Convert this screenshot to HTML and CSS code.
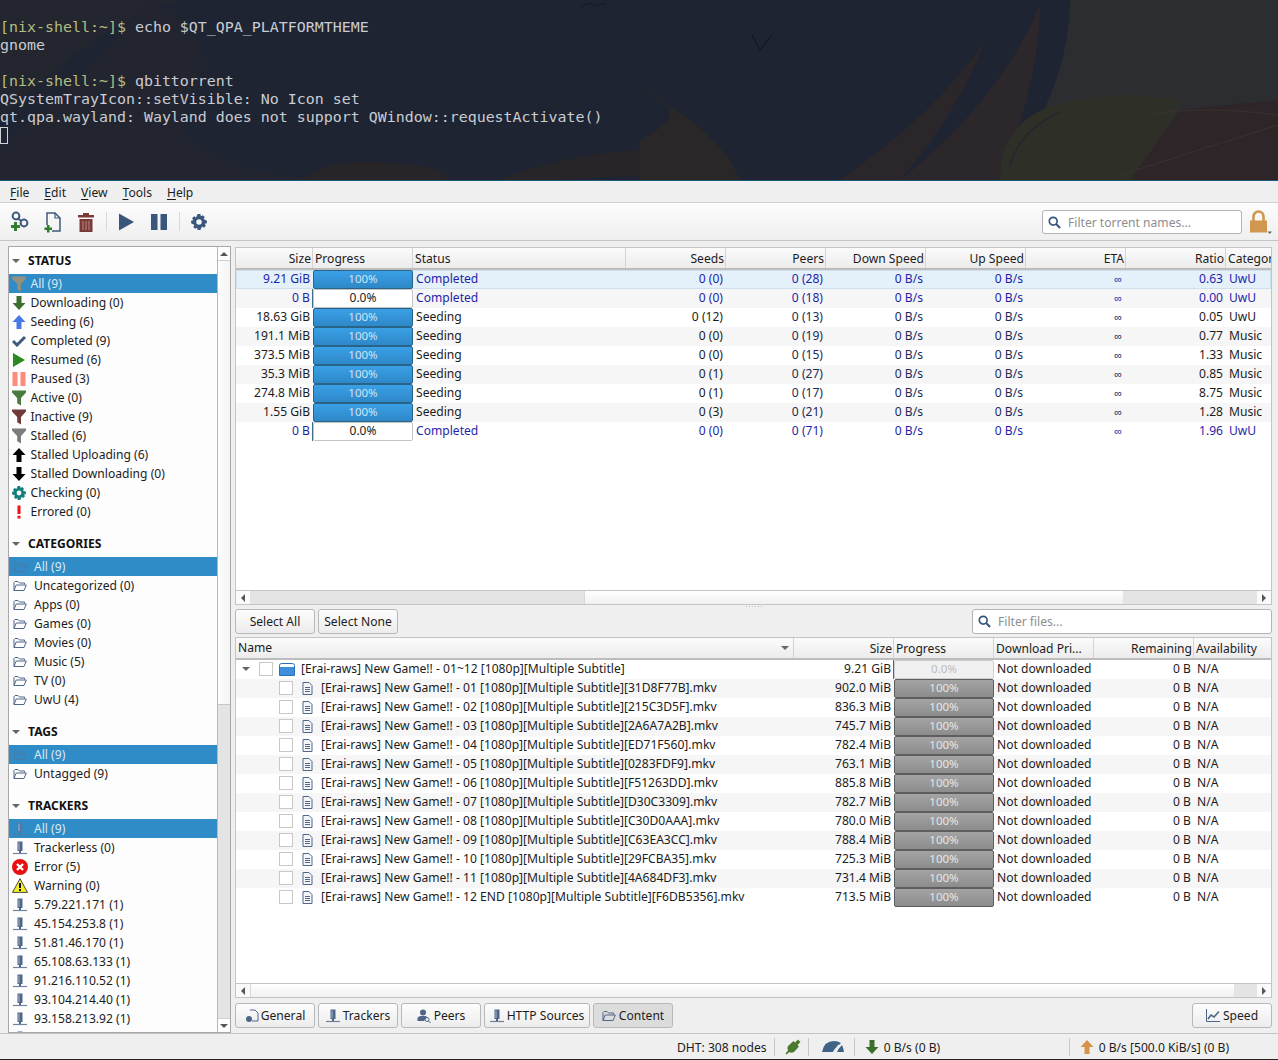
FILE: index.html
```html
<!DOCTYPE html>
<html lang="en">
<head>
    <meta charset="UTF-8">
    <title>qBittorrent</title>
    <link rel="stylesheet" href="styles.css">
</head>
<body>
    <svg class="defs" width="0" height="0">
        <symbol id="folder" viewBox="0 0 14 12"><path d="M1 10.5V2.5L2 1.5H5L6.5 3H11.5V4.5M1 10.5H11L13.3 5H3.2L1 10.5Z" fill="none" stroke="currentColor" stroke-width="1"/></symbol>
        <symbol id="tracker" viewBox="0 0 14 14"><path d="M4.5 0.5H9.5V10H4.5Z" fill="currentColor"/><path d="M6 1.5V9" stroke="#a9b5c6" stroke-width="1"/><path d="M0 12.5H14" stroke="currentColor" stroke-width="1.2" opacity=".8"/><path d="M6 10H8V12H6Z" fill="currentColor"/></symbol>
        <symbol id="filter" viewBox="0 0 14 16"><path d="M0 0.5H14V2.5L9 8V15.5L5.2 13.2V8L0 2.5Z" fill="currentColor"/></symbol>
        <symbol id="arrow-up" viewBox="0 0 14 14"><path d="M7 0L13.5 7H9.5V14H4.5V7H0.5Z" fill="currentColor"/></symbol>
        <symbol id="arrow-down" viewBox="0 0 14 14"><path d="M7 14L13.5 7H9.5V0H4.5V7H0.5Z" fill="currentColor"/></symbol>
        <symbol id="gear" viewBox="0 0 14 14"><path d="M5.8 0H8.2L8.6 2L10.3 1L12 2.7L11 4.4L13.9 5.8V8.2L12 8.6L13 10.3L11.3 12L9.6 11L8.2 14H5.8L5.4 12L3.7 13L2 11.3L3 9.6L0.1 8.2V5.8L2 5.4L1 3.7L2.7 2L4.4 3ZM7 4.6A2.4 2.4 0 1 0 7 9.4A2.4 2.4 0 1 0 7 4.6Z" fill="currentColor" fill-rule="evenodd"/></symbol>
        <symbol id="search" viewBox="0 0 14 14"><circle cx="5.6" cy="5.6" r="4.2" fill="none" stroke="currentColor" stroke-width="1.8"/><path d="M8.7 8.7L13 13" stroke="currentColor" stroke-width="2.2"/></symbol>
        <symbol id="doc" viewBox="0 0 11 13"><path d="M1 0.5H7L10 3.5V12.5H1Z" fill="#f4f6fa" stroke="currentColor"/><path d="M3 5.5H8M3 7.5H8M3 9.5H8" stroke="currentColor"/></symbol>
    </svg>

    <div class="terminal">
        <svg class="wall" viewBox="0 0 1278 180" width="1278" height="180">
            <path d="M0 180V120Q100 20 180 0H0Z" fill="#23262e"/>
            <path d="M150 0Q230 40 190 100Q150 160 320 180H0V150Q100 60 150 0Z" fill="#222530"/>
            <path d="M640 180V140Q700 110 640 90Q720 130 740 180Z" fill="#2a2729"/>
            <path d="M840 180Q940 110 985 40Q960 110 900 180Z" fill="#2b2629"/>
            <path d="M900 180Q1000 100 1040 5Q1040 80 1000 180Z" fill="#2b272b"/>
            <path d="M1000 180Q1070 90 1070 0H1278V180Z" fill="#2c2d30"/>
            <path d="M1000 180Q1000 110 1080 100Q1120 90 1180 100L1150 180Z" fill="#2e3028"/>
            <path d="M1130 180L1180 110L1278 100V180Z" fill="#2e2529"/>
            <path d="M1010 165Q1020 130 1060 112" fill="none" stroke="#1f2534" stroke-width="1.2"/>
            <path d="M1150 115Q1200 105 1278 115M1120 175L1278 125" fill="none" stroke="#3a3230" stroke-width="1"/>
            <path d="M300 180Q340 150 440 170L450 180ZM640 175L560 180H500Q560 155 640 150Z" fill="#272527"/>
            <path d="M752 35L760 50L772 35" fill="none" stroke="#151925" stroke-width="1.2"/>
            <path d="M581 7Q590 0 596 6Q600 2 606 4" fill="none" stroke="#151925" stroke-width="1"/>
        </svg>
        <div><span class="prompt">[nix-shell:~]$</span> echo $QT_QPA_PLATFORMTHEME</div>
        <div>gnome</div>
        <div>&nbsp;</div>
        <div><span class="prompt">[nix-shell:~]$</span> qbittorrent</div>
        <div>QSystemTrayIcon::setVisible: No Icon set</div>
        <div>qt.qpa.wayland: Wayland does not support QWindow::requestActivate()</div>
        <div class="cursor"></div>
    </div>

    <div class="app">
        <div class="menubar">
            <span><u>F</u>ile</span>
            <span><u>E</u>dit</span>
            <span><u>V</u>iew</span>
            <span><u>T</u>ools</span>
            <span><u>H</u>elp</span>
        </div>

        <div class="toolbar">
            <svg class="tool" viewBox="0 0 22 22" width="22" height="22"><g fill="none" stroke="#3f5a7c" stroke-width="2"><circle cx="7" cy="5" r="3.4"/><circle cx="15" cy="12" r="3.4"/><path d="M9 7.5L12.5 10"/></g><path d="M5 11H8V14H11V17H8V20H5V17H2V14H5Z" fill="#2f7d32"/></svg>
            <svg class="tool" viewBox="0 0 22 22" width="22" height="22"><path d="M5 14V2H13L18 7V20H10" fill="none" stroke="#41587a" stroke-width="1.5"/><path d="M13 2V7H18" fill="none" stroke="#41587a" stroke-width="1.2"/><path d="M5 14H7.5V16.5H10V19H7.5V21.5H5V19H2.5V16.5H5Z" fill="#2f7d32"/></svg>
            <svg class="tool" viewBox="0 0 22 22" width="22" height="22"><path d="M3 4H8V2H14V4H19V6.5H3ZM4.5 8H17.5V21H4.5Z" fill="#7c3a36"/><path d="M8 10V19M11 10V19M14 10V19" stroke="#b58a86" stroke-width="1"/></svg>
            <i class="tool-sep"></i>
            <svg class="tool" viewBox="0 0 22 22" width="22" height="22"><path d="M4 2.5L19 11L4 19.5Z" fill="#39567c"/></svg>
            <svg class="tool" viewBox="0 0 22 22" width="22" height="22"><path d="M3 3H9.5V19H3ZM12.5 3H19V19H12.5Z" fill="#39567c"/></svg>
            <i class="tool-sep"></i>
            <svg class="tool-gear" width="16" height="16"><use href="#gear"/></svg>
            <div class="toolbar-fill"></div>
            <div class="filter-box filter-torrents">
                <svg width="13" height="13"><use href="#search"/></svg>
                <span>Filter torrent names...</span>
            </div>
            <svg class="lock" viewBox="0 0 22 24" width="22" height="24"><path d="M3.5 11V6.5A5 5 0 0 1 13.5 6.5V11" fill="none" stroke="#cf9750" stroke-width="2.6"/><path d="M0 10.5H17V22.5H0Z" fill="#cf9750"/><path d="M17.5 21.5H22L19.7 24Z" fill="#666"/></svg>
        </div>

        <div class="main">
            <div class="sidebar">
                <div class="side-list">
                    <div class="side-head first"><i class="caret"></i>STATUS</div>
                    <div class="side-row sel st"><svg class="c-grey-t" width="14" height="16"><use href="#filter"/></svg>All (9)</div>
                    <div class="side-row st"><svg class="c-green" width="14" height="14"><use href="#arrow-down"/></svg>Downloading (0)</div>
                    <div class="side-row st"><svg class="c-blue" width="14" height="14"><use href="#arrow-up"/></svg>Seeding (6)</div>
                    <div class="side-row st"><svg class="c-navy" viewBox="0 0 14 12" width="14" height="12"><path d="M1 6L5 10L13 2" fill="none" stroke="currentColor" stroke-width="3"/></svg>Completed (9)</div>
                    <div class="side-row st"><svg class="c-play" viewBox="0 0 14 14" width="14" height="14"><path d="M1 0L13 7L1 14Z" fill="currentColor"/></svg>Resumed (6)</div>
                    <div class="side-row st"><svg class="c-pause" viewBox="0 0 14 14" width="14" height="14"><path d="M0.5 0H5.5V14H0.5ZM8.5 0H13.5V14H8.5Z" fill="currentColor"/></svg>Paused (3)</div>
                    <div class="side-row st"><svg class="c-green2" width="14" height="16"><use href="#filter"/></svg>Active (0)</div>
                    <div class="side-row st"><svg class="c-maroon" width="14" height="16"><use href="#filter"/></svg>Inactive (9)</div>
                    <div class="side-row st"><svg class="c-grey" width="14" height="16"><use href="#filter"/></svg>Stalled (6)</div>
                    <div class="side-row st"><svg class="c-black" width="14" height="14"><use href="#arrow-up"/></svg>Stalled Uploading (6)</div>
                    <div class="side-row st"><svg class="c-black" width="14" height="14"><use href="#arrow-down"/></svg>Stalled Downloading (0)</div>
                    <div class="side-row st"><svg class="c-teal" width="14" height="14"><use href="#gear"/></svg>Checking (0)</div>
                    <div class="side-row st"><svg class="c-red" viewBox="0 0 14 14" width="14" height="14"><path d="M5.5 0.5H8.5V9H5.5ZM5.5 10.7H8.5V13.5H5.5Z" fill="currentColor"/></svg>Errored (0)</div>

                    <div class="side-head"><i class="caret"></i>CATEGORIES</div>
                    <div class="side-row sel"><svg class="c-dim" width="14" height="12"><use href="#folder"/></svg>All (9)</div>
                    <div class="side-row"><svg class="c-slate" width="14" height="12"><use href="#folder"/></svg>Uncategorized (0)</div>
                    <div class="side-row"><svg class="c-slate" width="14" height="12"><use href="#folder"/></svg>Apps (0)</div>
                    <div class="side-row"><svg class="c-slate" width="14" height="12"><use href="#folder"/></svg>Games (0)</div>
                    <div class="side-row"><svg class="c-slate" width="14" height="12"><use href="#folder"/></svg>Movies (0)</div>
                    <div class="side-row"><svg class="c-slate" width="14" height="12"><use href="#folder"/></svg>Music (5)</div>
                    <div class="side-row"><svg class="c-slate" width="14" height="12"><use href="#folder"/></svg>TV (0)</div>
                    <div class="side-row"><svg class="c-slate" width="14" height="12"><use href="#folder"/></svg>UwU (4)</div>

                    <div class="side-head"><i class="caret"></i>TAGS</div>
                    <div class="side-row sel"><svg class="c-dim" width="14" height="12"><use href="#folder"/></svg>All (9)</div>
                    <div class="side-row"><svg class="c-slate" width="14" height="12"><use href="#folder"/></svg>Untagged (9)</div>

                    <div class="side-head"><i class="caret"></i>TRACKERS</div>
                    <div class="side-row sel"><svg class="c-dim" width="14" height="14"><use href="#tracker"/></svg>All (9)</div>
                    <div class="side-row"><svg class="c-slate" width="14" height="14"><use href="#tracker"/></svg>Trackerless (0)</div>
                    <div class="side-row"><svg viewBox="0 0 16 16" width="16" height="16" class="wide"><circle cx="8" cy="8" r="8" fill="#e8100f"/><path d="M5 5L11 11M11 5L5 11" stroke="#fff" stroke-width="2.4"/></svg>Error (5)</div>
                    <div class="side-row"><svg viewBox="0 0 16 15" width="16" height="15" class="wide"><path d="M8 0.7L15.5 14.4H0.5Z" fill="#f8ee2c" stroke="#333" stroke-width="0.9"/><path d="M7 5H9V10H7ZM7 11H9V13H7Z" fill="#111"/></svg>Warning (0)</div>
                    <div class="side-row"><svg class="c-slate" width="14" height="14"><use href="#tracker"/></svg>5.79.221.171 (1)</div>
                    <div class="side-row"><svg class="c-slate" width="14" height="14"><use href="#tracker"/></svg>45.154.253.8 (1)</div>
                    <div class="side-row"><svg class="c-slate" width="14" height="14"><use href="#tracker"/></svg>51.81.46.170 (1)</div>
                    <div class="side-row"><svg class="c-slate" width="14" height="14"><use href="#tracker"/></svg>65.108.63.133 (1)</div>
                    <div class="side-row"><svg class="c-slate" width="14" height="14"><use href="#tracker"/></svg>91.216.110.52 (1)</div>
                    <div class="side-row"><svg class="c-slate" width="14" height="14"><use href="#tracker"/></svg>93.104.214.40 (1)</div>
                    <div class="side-row"><svg class="c-slate" width="14" height="14"><use href="#tracker"/></svg>93.158.213.92 (1)</div>
                    <div class="side-row"><svg class="c-slate" width="14" height="14"><use href="#tracker"/></svg>94.23.207.177 (1)</div>
                </div>
                <div class="vscroll">
                    <div class="sb-btn"><i class="tri-up"></i></div>
                    <div class="vthumb"></div>
                    <div class="vtrack"></div>
                    <div class="sb-btn"><i class="tri-down"></i></div>
                </div>
            </div>

            <div class="content">
                <div class="table torrents">
                    <div class="thead torrent-cols">
                        <div class="r">Size</div><div>Progress</div><div>Status</div><div class="r">Seeds</div><div class="r">Peers</div><div class="r">Down Speed</div><div class="r">Up Speed</div><div class="r">ETA</div><div class="r">Ratio</div><div>Categor</div>
                    </div>
                    <div class="tbody">
                        <div class="trow torrent-cols current done"><div class="r">9.21 GiB</div><div class="pcell"><div class="bar blue">100%</div></div><div class="p">Completed</div><div class="r">0 (0)</div><div class="r">0 (28)</div><div class="r">0 B/s</div><div class="r">0 B/s</div><div class="r inf">∞</div><div class="r">0.63</div><div class="p">UwU</div></div>
                        <div class="trow torrent-cols alt done"><div class="r">0 B</div><div class="pcell"><div class="bar empty">0.0%</div></div><div class="p">Completed</div><div class="r">0 (0)</div><div class="r">0 (18)</div><div class="r">0 B/s</div><div class="r">0 B/s</div><div class="r inf">∞</div><div class="r">0.00</div><div class="p">UwU</div></div>
                        <div class="trow torrent-cols"><div class="r">18.63 GiB</div><div class="pcell"><div class="bar blue">100%</div></div><div class="p">Seeding</div><div class="r">0 (12)</div><div class="r up">0 (13)</div><div class="r up">0 B/s</div><div class="r up">0 B/s</div><div class="r inf up">∞</div><div class="r">0.05</div><div class="p">UwU</div></div>
                        <div class="trow torrent-cols alt"><div class="r">191.1 MiB</div><div class="pcell"><div class="bar blue">100%</div></div><div class="p">Seeding</div><div class="r">0 (0)</div><div class="r up">0 (19)</div><div class="r up">0 B/s</div><div class="r up">0 B/s</div><div class="r inf up">∞</div><div class="r">0.77</div><div class="p">Music</div></div>
                        <div class="trow torrent-cols"><div class="r">373.5 MiB</div><div class="pcell"><div class="bar blue">100%</div></div><div class="p">Seeding</div><div class="r">0 (0)</div><div class="r up">0 (15)</div><div class="r up">0 B/s</div><div class="r up">0 B/s</div><div class="r inf up">∞</div><div class="r">1.33</div><div class="p">Music</div></div>
                        <div class="trow torrent-cols alt"><div class="r">35.3 MiB</div><div class="pcell"><div class="bar blue">100%</div></div><div class="p">Seeding</div><div class="r">0 (1)</div><div class="r up">0 (27)</div><div class="r up">0 B/s</div><div class="r up">0 B/s</div><div class="r inf up">∞</div><div class="r">0.85</div><div class="p">Music</div></div>
                        <div class="trow torrent-cols"><div class="r">274.8 MiB</div><div class="pcell"><div class="bar blue">100%</div></div><div class="p">Seeding</div><div class="r">0 (1)</div><div class="r up">0 (17)</div><div class="r up">0 B/s</div><div class="r up">0 B/s</div><div class="r inf up">∞</div><div class="r">8.75</div><div class="p">Music</div></div>
                        <div class="trow torrent-cols alt"><div class="r">1.55 GiB</div><div class="pcell"><div class="bar blue">100%</div></div><div class="p">Seeding</div><div class="r">0 (3)</div><div class="r up">0 (21)</div><div class="r up">0 B/s</div><div class="r up">0 B/s</div><div class="r inf up">∞</div><div class="r">1.28</div><div class="p">Music</div></div>
                        <div class="trow torrent-cols done"><div class="r">0 B</div><div class="pcell"><div class="bar empty">0.0%</div></div><div class="p">Completed</div><div class="r">0 (0)</div><div class="r">0 (71)</div><div class="r">0 B/s</div><div class="r">0 B/s</div><div class="r inf">∞</div><div class="r">1.96</div><div class="p">UwU</div></div>
                    </div>
                    <div class="hscroll">
                        <div class="sb-btn"><i class="tri-left"></i></div>
                        <div class="hthumb hthumb-top"></div>
                        <div class="hfill"></div>
                        <div class="htrack-end"></div>
                        <div class="sb-btn"><i class="tri-right"></i></div>
                    </div>
                </div>

                <div class="grip"></div>

                <div class="files-bar">
                    <button class="btn btn-select">Select All</button>
                    <button class="btn btn-select">Select None</button>
                    <div class="toolbar-fill"></div>
                    <div class="filter-box filter-files">
                        <svg width="13" height="13"><use href="#search"/></svg>
                        <span>Filter files...</span>
                    </div>
                </div>

                <div class="table files">
                    <div class="thead file-cols">
                        <div class="name-head">Name<i class="caret sort"></i></div><div class="r">Size</div><div>Progress</div><div>Download Pri...</div><div class="r">Remaining</div><div>Availability</div>
                    </div>
                    <div class="tbody">
                        <div class="trow file-cols"><div class="fname root"><i class="caret"></i><i class="check"></i><svg class="folder-blue" viewBox="0 0 16 13" width="16" height="13"><path d="M0.5 2.5Q0.5 0.5 2.5 0.5H13.5Q15.5 0.5 15.5 2.5V12.5H0.5Z" fill="#fff" stroke="#2a6fb5"/><path d="M1 4H15V12H1Z" fill="#3d8fdc"/></svg>[Erai-raws] New Game!! - 01~12 [1080p][Multiple Subtitle]</div><div class="r">9.21 GiB</div><div class="pcell"><div class="bar off">0.0%</div></div><div class="p">Not downloaded</div><div class="r">0 B</div><div class="p">N/A</div></div>
                        <div class="trow file-cols alt"><div class="fname"><i class="check"></i><svg class="c-slate" width="11" height="13"><use href="#doc"/></svg>[Erai-raws] New Game!! - 01 [1080p][Multiple Subtitle][31D8F77B].mkv</div><div class="r">902.0 MiB</div><div class="pcell"><div class="bar grey">100%</div></div><div class="p">Not downloaded</div><div class="r">0 B</div><div class="p">N/A</div></div>
                        <div class="trow file-cols"><div class="fname"><i class="check"></i><svg class="c-slate" width="11" height="13"><use href="#doc"/></svg>[Erai-raws] New Game!! - 02 [1080p][Multiple Subtitle][215C3D5F].mkv</div><div class="r">836.3 MiB</div><div class="pcell"><div class="bar grey">100%</div></div><div class="p">Not downloaded</div><div class="r">0 B</div><div class="p">N/A</div></div>
                        <div class="trow file-cols alt"><div class="fname"><i class="check"></i><svg class="c-slate" width="11" height="13"><use href="#doc"/></svg>[Erai-raws] New Game!! - 03 [1080p][Multiple Subtitle][2A6A7A2B].mkv</div><div class="r">745.7 MiB</div><div class="pcell"><div class="bar grey">100%</div></div><div class="p">Not downloaded</div><div class="r">0 B</div><div class="p">N/A</div></div>
                        <div class="trow file-cols"><div class="fname"><i class="check"></i><svg class="c-slate" width="11" height="13"><use href="#doc"/></svg>[Erai-raws] New Game!! - 04 [1080p][Multiple Subtitle][ED71F560].mkv</div><div class="r">782.4 MiB</div><div class="pcell"><div class="bar grey">100%</div></div><div class="p">Not downloaded</div><div class="r">0 B</div><div class="p">N/A</div></div>
                        <div class="trow file-cols alt"><div class="fname"><i class="check"></i><svg class="c-slate" width="11" height="13"><use href="#doc"/></svg>[Erai-raws] New Game!! - 05 [1080p][Multiple Subtitle][0283FDF9].mkv</div><div class="r">763.1 MiB</div><div class="pcell"><div class="bar grey">100%</div></div><div class="p">Not downloaded</div><div class="r">0 B</div><div class="p">N/A</div></div>
                        <div class="trow file-cols"><div class="fname"><i class="check"></i><svg class="c-slate" width="11" height="13"><use href="#doc"/></svg>[Erai-raws] New Game!! - 06 [1080p][Multiple Subtitle][F51263DD].mkv</div><div class="r">885.8 MiB</div><div class="pcell"><div class="bar grey">100%</div></div><div class="p">Not downloaded</div><div class="r">0 B</div><div class="p">N/A</div></div>
                        <div class="trow file-cols alt"><div class="fname"><i class="check"></i><svg class="c-slate" width="11" height="13"><use href="#doc"/></svg>[Erai-raws] New Game!! - 07 [1080p][Multiple Subtitle][D30C3309].mkv</div><div class="r">782.7 MiB</div><div class="pcell"><div class="bar grey">100%</div></div><div class="p">Not downloaded</div><div class="r">0 B</div><div class="p">N/A</div></div>
                        <div class="trow file-cols"><div class="fname"><i class="check"></i><svg class="c-slate" width="11" height="13"><use href="#doc"/></svg>[Erai-raws] New Game!! - 08 [1080p][Multiple Subtitle][C30D0AAA].mkv</div><div class="r">780.0 MiB</div><div class="pcell"><div class="bar grey">100%</div></div><div class="p">Not downloaded</div><div class="r">0 B</div><div class="p">N/A</div></div>
                        <div class="trow file-cols alt"><div class="fname"><i class="check"></i><svg class="c-slate" width="11" height="13"><use href="#doc"/></svg>[Erai-raws] New Game!! - 09 [1080p][Multiple Subtitle][C63EA3CC].mkv</div><div class="r">788.4 MiB</div><div class="pcell"><div class="bar grey">100%</div></div><div class="p">Not downloaded</div><div class="r">0 B</div><div class="p">N/A</div></div>
                        <div class="trow file-cols"><div class="fname"><i class="check"></i><svg class="c-slate" width="11" height="13"><use href="#doc"/></svg>[Erai-raws] New Game!! - 10 [1080p][Multiple Subtitle][29FCBA35].mkv</div><div class="r">725.3 MiB</div><div class="pcell"><div class="bar grey">100%</div></div><div class="p">Not downloaded</div><div class="r">0 B</div><div class="p">N/A</div></div>
                        <div class="trow file-cols alt"><div class="fname"><i class="check"></i><svg class="c-slate" width="11" height="13"><use href="#doc"/></svg>[Erai-raws] New Game!! - 11 [1080p][Multiple Subtitle][4A684DF3].mkv</div><div class="r">731.4 MiB</div><div class="pcell"><div class="bar grey">100%</div></div><div class="p">Not downloaded</div><div class="r">0 B</div><div class="p">N/A</div></div>
                        <div class="trow file-cols"><div class="fname"><i class="check"></i><svg class="c-slate" width="11" height="13"><use href="#doc"/></svg>[Erai-raws] New Game!! - 12 END [1080p][Multiple Subtitle][F6DB5356].mkv</div><div class="r">713.5 MiB</div><div class="pcell"><div class="bar grey">100%</div></div><div class="p">Not downloaded</div><div class="r">0 B</div><div class="p">N/A</div></div>
                    </div>
                    <div class="hscroll">
                        <div class="sb-btn"><i class="tri-left"></i></div>
                        <div class="hfill"></div>
                        <div class="htrack-end small"></div>
                        <div class="sb-btn"><i class="tri-right"></i></div>
                    </div>
                </div>

                <div class="tabs">
                    <button class="btn tab tab-general"><svg class="c-slate" viewBox="0 0 14 14" width="14" height="14"><path d="M5 1H10L13 4V12H7" fill="none" stroke="currentColor"/><circle cx="4" cy="10" r="3" fill="currentColor"/></svg>General</button>
                    <button class="btn tab"><svg class="c-slate" width="14" height="14"><use href="#tracker"/></svg>Trackers</button>
                    <button class="btn tab"><svg class="c-slate" viewBox="0 0 14 14" width="14" height="14"><circle cx="6" cy="3.5" r="3" fill="currentColor"/><path d="M0.5 12V9.5Q1 7 4 7H8Q9.5 7 10 8L7 12Z" fill="currentColor"/><circle cx="10" cy="10.5" r="2" fill="none" stroke="currentColor"/><path d="M11.5 12L13.5 14" stroke="currentColor"/></svg>Peers</button>
                    <button class="btn tab tab-http"><svg class="c-slate" width="14" height="14"><use href="#tracker"/></svg>HTTP Sources</button>
                    <button class="btn tab active"><svg class="c-slate" width="14" height="12"><use href="#folder"/></svg>Content</button>
                    <div class="toolbar-fill"></div>
                    <button class="btn tab"><svg class="c-slate" viewBox="0 0 14 13" width="14" height="13"><path d="M0.5 0V12.5H14" fill="none" stroke="currentColor"/><path d="M2 10L5 6L8 8L13 2.5" fill="none" stroke="currentColor" stroke-width="1.6"/></svg>Speed</button>
                </div>
            </div>
        </div>

        <div class="statusbar">
            <span class="sb-item sb-dht">DHT: 308 nodes</span>
            <i class="sb-sep"></i>
            <svg class="sb-item" viewBox="0 0 16 16" width="16" height="16"><path d="M13 0.5L15.5 3L12.5 6L14 7.5L9 13Q6 14.5 4.5 13L1.5 15.5L0.5 14.5L3 11.5Q1.5 9.5 3 7L8.5 2L10 3.5Z" fill="#4b7a2e"/></svg>
            <i class="sb-sep"></i>
            <svg class="sb-item sb-gauge" viewBox="0 0 22 14" width="24" height="14"><path d="M0 12Q2 1 12 1Q16 1 19 3L13 9L11 12ZM20 5Q21.5 8 22 12H15L16.5 9Z" fill="#3f6287"/><path d="M11 13L17 5" stroke="#eee" stroke-width="1.5"/></svg>
            <i class="sb-sep"></i>
            <span class="sb-item sb-speed sb-down"><svg class="c-green" width="14" height="14"><use href="#arrow-down"/></svg>0 B/s (0 B)</span>
            <i class="sb-sep"></i>
            <span class="sb-item sb-speed"><svg class="c-orange" width="14" height="14"><use href="#arrow-up"/></svg>0 B/s [500.0 KiB/s] (0 B)</span>
        </div>
    </div>
</body>
</html>
```

FILE: styles.css
```css
* {
    box-sizing: border-box;
    margin: 0;
    padding: 0;
}

html, body {
    height: 1060px;
    overflow: hidden;
}

body {
    background-color: #222;
    color: #1c1c1c;
    font-family: "Noto Sans", sans-serif;
    font-size: 12.1px;
    display: flex;
    flex-direction: column;
}

.defs {
    position: absolute;
}

svg {
    flex: none;
    display: block;
}

/* terminal behind the window */
.terminal {
    position: relative;
    height: 181px;
    flex: none;
    padding-top: 18px;
    color: #c9ccd3;
    font-family: "DejaVu Sans Mono", monospace;
    font-size: 14.95px;
    line-height: 18px;
    border-bottom: 1px solid #1f5a7a;
    background-color: #1e2431;
    overflow: hidden;
}

.terminal > div {
    position: relative;
}

.wall {
    position: absolute;
    top: 0;
    left: 0;
}

.prompt {
    color: #b4bd82;
}

.terminal > .cursor {
    width: 8px;
    height: 17px;
    margin-top: 1px;
    border: 1px solid #d0d2d8;
}

/* main window */
.app {
    flex: none;
    height: 878px;
    background-color: #efefef;
    display: flex;
    flex-direction: column;
}

.menubar {
    height: 22px;
    flex: none;
    display: flex;
    gap: 15px;
    padding: 3px 0 0 10px;
    line-height: 17px;
    background-color: #efefef;
    border-bottom: 1px solid #d0d0d0;
}

.menubar u {
    text-underline-offset: 2px;
}

.toolbar {
    height: 38px;
    flex: none;
    display: flex;
    align-items: center;
    padding: 0 6px 0 9px;
    background: linear-gradient(#fcfcfc, #efefef);
    border-bottom: 1px solid #c4c4c4;
}

.tool {
    margin-right: 11px;
}

.tool-sep {
    width: 1px;
    height: 19px;
    background-color: #d8d8d8;
    margin: 0 8px 0 -2px;
}

.tool-gear {
    color: #39567c;
    margin-left: 3px;
}

.toolbar-fill {
    flex: 1;
}

.filter-box {
    display: flex;
    align-items: center;
    gap: 7px;
    padding-left: 5px;
    background-color: #fff;
    border: 1px solid #b4b4b4;
    border-radius: 3px;
    color: #39567c;
}

.filter-box span {
    color: #8e8e8e;
}

.filter-torrents {
    width: 200px;
    height: 24px;
    margin: 1px 8px 0 0;
}

.filter-files {
    width: 300px;
    height: 25px;
}

.main {
    height: 793px;
    flex: none;
    display: flex;
    padding: 5px 6px 0 8px;
    gap: 4px;
    border-bottom: 1px solid #c4c4c4;
}

/* left filter panel */
.sidebar {
    width: 223px;
    flex: none;
    display: flex;
    background-color: #fdfdfd;
    border: 1px solid #a8a8a8;
    overflow: hidden;
}

.side-list {
    width: 209px;
    flex: none;
    overflow: hidden;
    border-right: 1px solid #b8b8b8;
}

.side-head {
    height: 19px;
    margin-top: 13px;
    padding-left: 3px;
    display: flex;
    align-items: center;
    font-weight: 700;
    color: #111;
}

.side-head.first {
    margin-top: 4px;
}

.caret {
    width: 0;
    height: 0;
    border-left: 4px solid transparent;
    border-right: 4px solid transparent;
    border-top: 4px solid #666;
    margin-right: 8px;
    flex: none;
}

.side-row {
    height: 19px;
    display: flex;
    align-items: center;
    gap: 7px;
    padding-left: 4px;
    white-space: nowrap;
}

.side-row.st {
    gap: 4.5px;
    padding-left: 3px;
}

.side-head + .side-row {
    margin-top: 4px;
}

.side-row.sel {
    background-color: #308cc6;
    color: #dbe8f2;
}

.side-row .wide {
    margin-left: -1px;
    margin-right: -1px;
}

.c-grey-t { color: #94907e; }
.c-green { color: #3c6e2e; }
.c-green2 { color: #4a7a3e; }
.c-blue { color: #4a78e8; }
.c-navy { color: #3f5a7c; }
.c-play { color: #2a8a1f; }
.c-pause { color: #ff8a7a; }
.c-maroon { color: #6f3a3a; }
.c-grey { color: #7c7c7c; }
.c-black { color: #000; }
.c-teal { color: #12807c; }
.c-red { color: #f0101a; }
.c-dim { color: #4a7aa5; }
.c-slate { color: #4f6688; }
.c-orange { color: #d8934a; }

/* scrollbars */
.vscroll {
    flex: 1;
    display: flex;
    flex-direction: column;
    background-color: #fdfdfd;
}

.sb-btn {
    width: 13px;
    height: 13px;
    flex: none;
    display: flex;
    align-items: center;
    justify-content: center;
}

.vscroll .sb-btn {
    width: 100%;
    height: 14px;
    border-bottom: 1px solid #d0d0d0;
}

.vscroll .sb-btn:last-child {
    border-bottom: none;
    border-top: 1px solid #d0d0d0;
}

.vthumb {
    height: 444px;
    background: linear-gradient(90deg, #fdfdfd, #f4f4f4);
    border-bottom: 1px solid #c8c8c8;
}

.vtrack {
    flex: 1;
    background-color: #e4e4e4;
}

.tri-up, .tri-down, .tri-left, .tri-right {
    width: 0;
    height: 0;
    border: 4px solid transparent;
}

.tri-up { border-bottom-color: #555; margin-top: -4px; }
.tri-down { border-top-color: #555; margin-top: 4px; }
.tri-left { border-right-color: #555; margin-left: -4px; }
.tri-right { border-left-color: #555; margin-left: 4px; }

.hscroll {
    height: 14px;
    flex: none;
    display: flex;
    border-top: 1px solid #c4c4c4;
    background-color: #fff;
}

.hscroll .sb-btn {
    width: 14px;
    background-color: #fafafa;
}

.hthumb-top {
    width: 334px;
    background-color: #e4e4e4;
}

.hfill {
    flex: 1;
    background: linear-gradient(#fff, #f0f0f0);
    border-left: 1px solid #d8d8d8;
}

.htrack-end {
    width: 134px;
    background-color: #e4e4e4;
}

.htrack-end.small {
    width: 23px;
}

/* right side */
.content {
    flex: 1;
    min-width: 0;
    display: flex;
    flex-direction: column;
    padding-top: 1px;
}

.table {
    background-color: #fff;
    border: 1px solid #c4c4c4;
    display: flex;
    flex-direction: column;
    overflow: hidden;
}

.torrents {
    height: 358px;
    flex: none;
}

.files {
    height: 361px;
    flex: none;
}

.tbody {
    flex: 1;
    min-height: 0;
}

.torrent-cols {
    display: grid;
    grid-template-columns: 77px 100px 213px 100px 100px 100px 100px 100px 100px 45px;
}

.file-cols {
    display: grid;
    grid-template-columns: 558px 100px 100px 100px 100px 77px;
}

.thead {
    height: 22px;
    flex: none;
    line-height: 22px;
    background: linear-gradient(#fbfbfb, #ececec);
    border-bottom: 2px solid #bcbcbc;
}

.thead > div {
    padding: 0 1px 0 2px;
    border-right: 1px solid #d4d4d4;
    white-space: nowrap;
    overflow: hidden;
}

.thead > div:last-child {
    border-right: none;
}

.r {
    text-align: right;
}

.trow {
    height: 19px;
    line-height: 18px;
}

.trow > div {
    padding: 0 3px;
    white-space: nowrap;
    overflow: hidden;
}

.trow.alt {
    background-color: #f6f6f6;
}

.trow.current {
    background-color: #e4f1fa;
    box-shadow: inset 0 0 0 1px #cfe0ec;
}

.done {
    color: #1f1fa8;
}

.up {
    color: #1c2a55;
}

.trow > .inf {
    font-size: 11px;
    padding-right: 4px;
}

.trow > .pcell {
    padding: 0;
    overflow: visible;
}

.pcell:has(.empty), .pcell:has(.off) {
    box-shadow: -1px 0 0 #3f6e8e;
}

.bar {
    height: 19px;
    line-height: 16px;
    text-align: center;
    border-radius: 2px;
    font-size: 11.5px;
}

.bar.blue {
    color: #cfe4f5;
    background: linear-gradient(#3aa0e6, #2e88c8);
    border: 1px solid #2a6388;
}

.bar.empty {
    color: #222;
    background-color: #fff;
    border: 1px solid #c4c4c4;
    font-size: 12px;
}

.bar.off {
    color: #bcbcbc;
    background-color: #f0f0f0;
    border: 1px solid #cfcfcf;
}

.bar.grey {
    color: #e6e6e6;
    background: linear-gradient(#a4a4a4, #8c8c8c);
    border: 1px solid #5e5e5e;
}

.grip {
    height: 4px;
    flex: none;
    margin: 0 auto;
    width: 18px;
    background-image: radial-gradient(#bbb 0.6px, transparent 0.7px);
    background-size: 3px 3px;
}

.files-bar {
    height: 26px;
    flex: none;
    display: flex;
    gap: 3px;
    margin-bottom: 2px;
}

.btn {
    height: 25px;
    font: inherit;
    color: inherit;
    background: linear-gradient(#fdfdfd, #ececec);
    border: 1px solid #b8b8b8;
    border-radius: 3px;
}

.btn-select {
    width: 80px;
}

.name-head {
    display: flex;
    align-items: center;
    justify-content: space-between;
}

.caret.sort {
    margin-right: 3px;
}

.trow > .fname {
    display: flex;
    align-items: center;
    height: 18px;
    padding-left: 43px;
}

.trow > .fname.root {
    padding-left: 6px;
}

.fname .caret {
    margin-right: 9px;
}

.check {
    width: 14px;
    height: 14px;
    flex: none;
    margin-right: 9px;
    background-color: #fff;
    border: 1px solid #c8c8c8;
}

.fname.root .check {
    margin-right: 6px;
}

.fname > svg {
    margin-right: 8px;
}

.fname.root > svg {
    margin-right: 6px;
}

.tabs {
    height: 25px;
    flex: none;
    margin-top: 5px;
    display: flex;
    gap: 3px;
}

.tab {
    width: 80px;
    display: flex;
    align-items: center;
    justify-content: center;
    gap: 3px;
}

.tab-general {
    gap: 2px;
}

.tab-http {
    width: 106px;
}

.tab.active {
    background: #dcdcdc;
}

/* bottom status bar */
.statusbar {
    flex: 1;
    display: flex;
    align-items: center;
    padding: 1px 0 0 677px;
}

.sb-item {
    white-space: nowrap;
}

.sb-sep {
    width: 1px;
    height: 18px;
    background-color: #c8c8c8;
    margin: 0 10px 0 7px;
}

.sb-gauge {
    margin: 0 2px;
}

.sb-speed {
    display: flex;
    align-items: center;
    gap: 5px;
}

.sb-down {
    width: 197px;
}
```
